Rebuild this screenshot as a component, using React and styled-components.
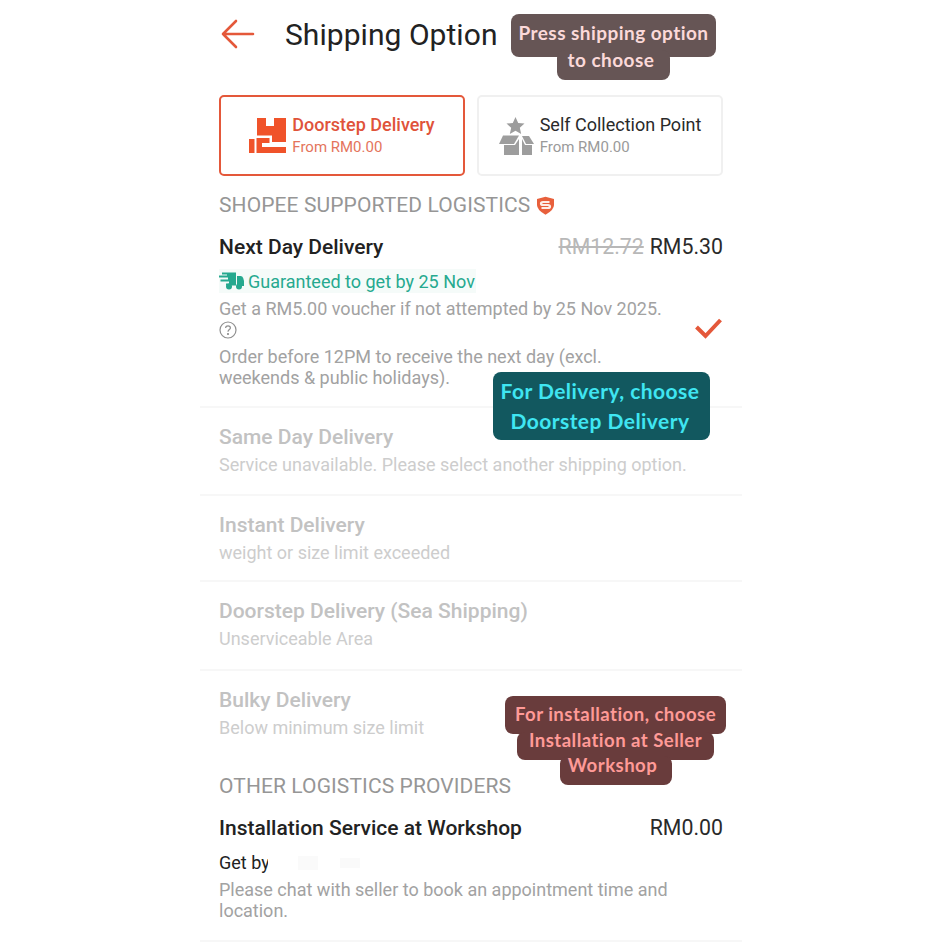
import styled, { createGlobalStyle } from 'styled-components'

const GlobalStyle = createGlobalStyle`
    html, body {
        margin: 0;
        padding: 0;
        background: #fff;
    }
    body {
        font-family: Roboto, "Liberation Sans", sans-serif;
    }
`

const Page = styled.div`
    position: relative;
    width: 942px;
    height: 942px;
    overflow: hidden;
    background: #fff;
`

const Column = styled.div`
    box-sizing: border-box;
    width: 542px;
    margin-left: 200px;
`

const Header = styled.header`
    box-sizing: border-box;
    display: flex;
    align-items: center;
    gap: 30px;
    height: 70px;
    padding: 0 0 2px 21px;
`

const Title = styled.h1`
    margin: 0;
    font-size: 30px;
    font-weight: 400;
    letter-spacing: 0.05px;
    color: #222;
`

const Tabs = styled.div`
    display: flex;
    gap: 12px;
    margin: 25px 19px 0;
`

const Tab = styled.div`
    box-sizing: border-box;
    display: flex;
    align-items: center;
    justify-content: center;
    gap: ${p => (p.$active ? '6px' : '6px')};
    width: 246px;
    height: 81px;
    border-radius: 5px;
    border: ${p => (p.$active ? '2px solid #e4583a' : '2px solid #f0f0f0')};
`

const TabText = styled.div`
    display: flex;
    flex-direction: column;
    gap: 1px;
    padding-bottom: 2px;
`

const TabName = styled.div`
    font-size: 18px;
    line-height: 24px;
    font-weight: ${p => (p.$active ? 500 : 400)};
    color: ${p => (p.$active ? '#e0533a' : '#2a2a2a')};
`

const TabSub = styled.div`
    font-size: 15px;
    line-height: 19px;
    color: ${p => (p.$active ? '#e4745c' : '#9a9a9a')};
`

const SectionLabel = styled.div`
    display: flex;
    align-items: center;
    gap: 6px;
    margin: ${p => p.$margin};
    padding-left: 19px;
    font-size: 21px;
    letter-spacing: 0.1px;
    line-height: 30px;
    color: #969696;
`

const Row = styled.div`
    box-sizing: border-box;
    padding: 14px 19px ${p => p.$bottom}px;
    border-bottom: 2px solid #f7f7f7;
`

const RowTop = styled.div`
    display: flex;
    justify-content: space-between;
    align-items: center;
    height: 26px;
`

const RowName = styled.div`
    font-size: 21px;
    line-height: 26px;
    font-weight: 500;
    color: #222;
`

const Prices = styled.div`
    display: flex;
    gap: 6px;
    font-size: 21.3px;
    line-height: 26px;
    color: #2a2a2a;
`

const OldPrice = styled.span`
    color: #b8b8b8;
    text-decoration: line-through;
`

const RowBody = styled.div`
    display: flex;
    align-items: center;
    justify-content: space-between;
    margin-top: 9px;
    padding-right: 1px;
`

const Details = styled.div`
    width: 470px;
`

const Guarantee = styled.div`
    display: flex;
    align-items: center;
    gap: 4px;
    width: 257px;
    height: 24px;
    margin-bottom: 5px;
    font-size: 18px;
    color: #26a98f;
    background: #f5fbf9;
`

const Note = styled.div`
    font-size: 18px;
    line-height: 21.5px;
    color: #a2a2a2;
    padding-top: ${p => p.$top || 0}px;
`

const HelpWrap = styled.div`
    display: flex;
    align-items: center;
    height: 20px;
    margin-bottom: 6px;
`

const DisabledRow = styled.div`
    box-sizing: border-box;
    height: ${p => p.$height}px;
    padding: 16px 19px 0;
    border-bottom: 2px solid ${p => (p.$plain ? 'transparent' : '#f7f7f7')};
`

const DisabledName = styled.div`
    font-size: 21px;
    line-height: 26px;
    font-weight: 500;
    color: #c2c2c2;
`

const DisabledSub = styled.div`
    margin-top: 4px;
    font-size: 18px;
    line-height: 22px;
    color: #cdcdcd;
`

const GetBy = styled.div`
    display: flex;
    align-items: center;
    height: 24px;
    margin-top: 10px;
    font-size: 18px;
    color: #222;
`

const GetByText = styled.span`
    width: 49px;
    overflow: hidden;
    white-space: nowrap;
`

const Smudge = styled.span`
    width: ${p => p.$w}px;
    height: ${p => p.$h}px;
    margin-left: ${p => p.$left}px;
    background: #fafafa;
`

const Sticker = styled.div`
    position: absolute;
    left: ${p => p.$x}px;
    top: ${p => p.$y}px;
    width: ${p => p.$w}px;
    display: flex;
    flex-direction: column;
    align-items: center;
    font-family: Lato, "Open Sans", sans-serif;
    font-weight: 700;
    letter-spacing: 0.45px;
    font-size: ${p => p.$size}px;
    color: ${p => p.$color};
`

const StickerLine = styled.div`
    box-sizing: border-box;
    width: ${p => p.$w}px;
    height: ${p => p.$h}px;
    margin-top: ${p => p.$top || 0}px;
    padding: 0 ${p => p.$padRight || 0}px ${p => p.$padBottom || 0}px 0;
    display: flex;
    align-items: center;
    justify-content: center;
    text-align: center;
    line-height: ${p => p.$leading || 'normal'};
    white-space: nowrap;
    background: ${p => p.$bg};
    border-radius: 8px;
`

const BackArrow = () => (
    <svg width="34" height="30" viewBox="0 0 34 30" fill="none" stroke="#e4583a" strokeWidth="2.6" strokeLinecap="round" strokeLinejoin="round">
        <path d="M2 15 H32 M15 2 L2 15 L15 28" />
    </svg>
)

const BoxesIcon = () => (
    <svg width="37" height="35" viewBox="0 0 37 35" fill="#f0532a">
        <path d="M8 0 H17 V8 H25 V0 H37 V24 H23 V17.5 H8 Z" />
        <path d="M0 21 H5.5 V35 H0 Z" />
        <path d="M7.5 20 H20.5 V25 H13 V29 H37 V35 H7.5 Z" />
    </svg>
)

const PickupIcon = () => (
    <svg width="35" height="38" viewBox="0 0 35 38" fill="#9d9d9d">
        <path d="M16.5 0 L19.2 6 L25.5 6.6 L20.8 10.8 L22.2 17 L16.5 13.8 L10.8 17 L12.2 10.8 L7.5 6.6 L13.8 6 Z" />
        <path d="M4 18.5 H20 L15 27 H0 Z" />
        <path d="M23 19 H30 L35 27 H27 Z" />
        <path d="M5 28 H16 L20 22 V38 H5 Z" />
        <path d="M23 22 L26 28 H33 V38 H23 Z" />
    </svg>
)

const ShieldIcon = () => (
    <svg width="19" height="19" viewBox="0 0 19 19">
        <path d="M1 3 L9.5 0.8 L18 3 V9 Q18 14 9.5 18.8 Q1 14 1 9 Z" fill="#e8603c" />
        <path d="M13.5 6 H7 Q5 6 5 7.5 Q5 9 7 9 H12 Q14 9 14 10.5 Q14 12 12 12 H5.5" fill="none" stroke="#fdeee8" strokeWidth="2.2" />
    </svg>
)

const TruckIcon = () => (
    <svg width="25" height="18" viewBox="0 0 25 18" fill="#26a98f">
        <path d="M3 0.5 H17 V13.5 H7 V11.5 H10 V9.5 H1.5 V7.5 H9 V5.5 H0 V3.5 H8 V2.5 H3 Z" />
        <path d="M18 4 H21.5 Q23.5 4 24.2 6 L25 9 V14 H18 Z" />
        <circle cx="10" cy="14.5" r="3" />
        <circle cx="20" cy="14.5" r="3" />
    </svg>
)

const HelpIcon = () => (
    <svg width="18" height="18" viewBox="0 0 18 18" fill="none" stroke="#8f8f8f" strokeWidth="1.2">
        <circle cx="9" cy="9" r="8" />
        <path d="M6.6 7 C6.6 5.4 7.8 4.8 9 4.8 C10.4 4.8 11.4 5.6 11.4 6.9 C11.4 8.6 9 8.6 9 10.8" />
        <circle cx="9" cy="13" r="0.5" fill="#8f8f8f" />
    </svg>
)

const CheckIcon = () => (
    <svg width="27" height="21" viewBox="0 0 27 21" fill="none" stroke="#e4583a" strokeWidth="4">
        <path d="M1.5 9 L10.5 18 L25.5 2" />
    </svg>
)

const unavailable = [
    { name: 'Same Day Delivery', note: 'Service unavailable. Please select another shipping option.', height: 88 },
    { name: 'Instant Delivery', note: 'weight or size limit exceeded', height: 86 },
    { name: 'Doorstep Delivery (Sea Shipping)', note: 'Unserviceable Area', height: 89 },
    { name: 'Bulky Delivery', note: 'Below minimum size limit', height: 87, plain: true },
]

const App = () => (
    <Page>
        <GlobalStyle />
        <Column>
            <Header>
                <BackArrow />
                <Title>Shipping Option</Title>
            </Header>
            <Tabs>
                <Tab $active>
                    <BoxesIcon />
                    <TabText>
                        <TabName $active>Doorstep Delivery</TabName>
                        <TabSub $active>From RM0.00</TabSub>
                    </TabText>
                </Tab>
                <Tab>
                    <PickupIcon />
                    <TabText>
                        <TabName>Self Collection Point</TabName>
                        <TabSub>From RM0.00</TabSub>
                    </TabText>
                </Tab>
            </Tabs>
            <SectionLabel $margin="14px 0 0">
                SHOPEE SUPPORTED LOGISTICS
                <ShieldIcon />
            </SectionLabel>
            <Row $bottom={17}>
                <RowTop>
                    <RowName>Next Day Delivery</RowName>
                    <Prices>
                        <OldPrice>RM12.72</OldPrice>
                        RM5.30
                    </Prices>
                </RowTop>
                <RowBody>
                    <Details>
                        <Guarantee>
                            <TruckIcon />
                            Guaranteed to get by 25 Nov
                        </Guarantee>
                        <Note>Get a RM5.00 voucher if not attempted by 25 Nov 2025.</Note>
                        <HelpWrap>
                            <HelpIcon />
                        </HelpWrap>
                        <Note>
                            Order before 12PM to receive the next day (excl.
                            <br />
                            weekends &amp; public holidays).
                        </Note>
                    </Details>
                    <CheckIcon />
                </RowBody>
            </Row>
            {unavailable.map(item => (
                <DisabledRow key={item.name} $height={item.height} $plain={item.plain}>
                    <DisabledName>{item.name}</DisabledName>
                    <DisabledSub>{item.note}</DisabledSub>
                </DisabledRow>
            ))}
            <SectionLabel $margin="13px 0 0">OTHER LOGISTICS PROVIDERS</SectionLabel>
            <Row $bottom={18}>
                <RowTop>
                    <RowName>Installation Service at Workshop</RowName>
                    <Prices>RM0.00</Prices>
                </RowTop>
                <GetBy>
                    <GetByText>Get by</GetByText>
                    <Smudge $w={20} $h={14} $left={30} />
                    <Smudge $w={20} $h={10} $left={22} />
                </GetBy>
                <Note $top={4}>
                    Please chat with seller to book an appointment time and
                    <br />
                    location.
                </Note>
            </Row>
        </Column>

        <Sticker $x={511} $y={14} $w={205} $size={19} $color="#fbd9d9">
            <StickerLine $w={205} $h={43} $padBottom={6} $bg="#665555">Press shipping option</StickerLine>
            <StickerLine $w={113} $h={30} $top={-7} $padBottom={12} $padRight={5} $bg="#665555">to choose</StickerLine>
        </Sticker>
        <Sticker $x={493} $y={372} $w={217} $size={21} $color="#3fe6f2">
            <StickerLine $w={217} $h={68} $leading="30px" $padRight={3} $bg="#12585f">
                For Delivery, choose
                <br />
                Doorstep Delivery
            </StickerLine>
        </Sticker>
        <Sticker $x={505} $y={696} $w={221} $size={18.6} $color="#ff9a97">
            <StickerLine $w={221} $h={38} $padBottom={2} $bg="#693c3c">For installation, choose</StickerLine>
            <StickerLine $w={197} $h={28} $top={-2} $padBottom={12} $bg="#693c3c">Installation at Seller</StickerLine>
            <StickerLine $w={112} $h={29} $top={-4} $padBottom={11} $padRight={6} $bg="#693c3c">Workshop</StickerLine>
        </Sticker>
    </Page>
)

export default App
